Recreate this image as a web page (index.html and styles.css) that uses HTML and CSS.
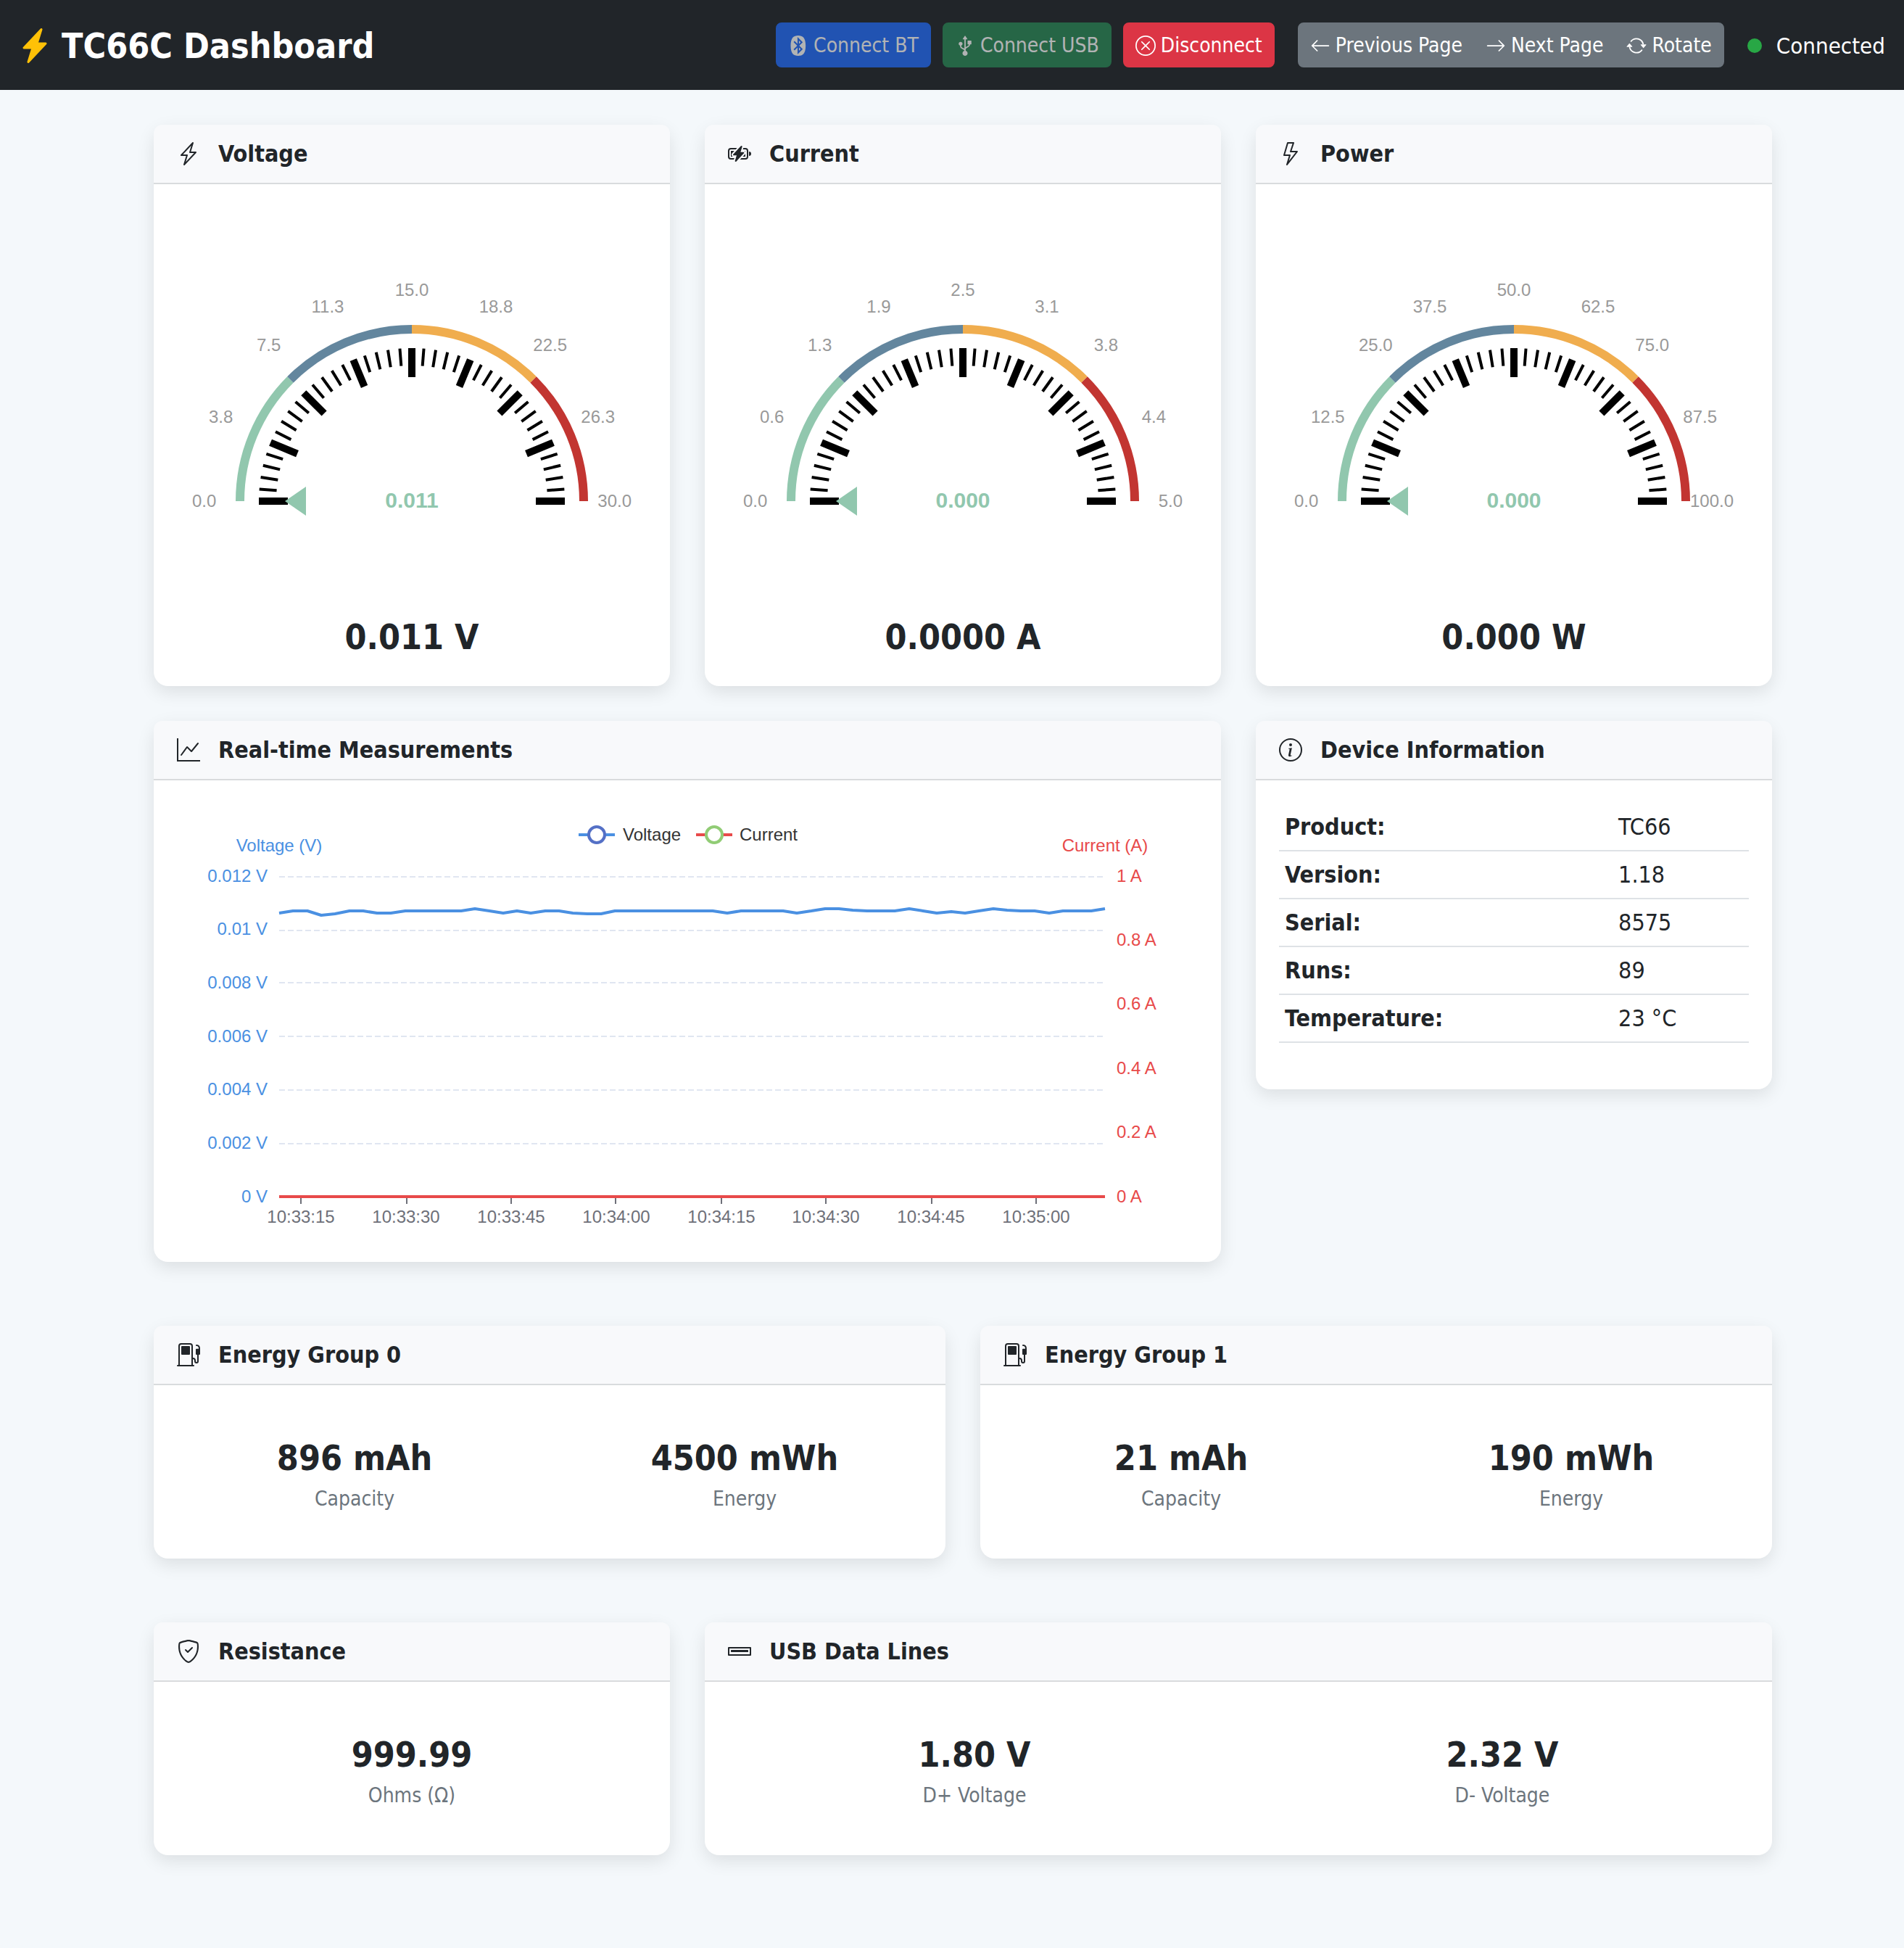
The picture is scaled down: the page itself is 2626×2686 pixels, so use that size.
FILE: index.html
```html
<!DOCTYPE html>
<html lang="en">
<head>
<meta charset="utf-8">
<meta name="viewport" content="width=device-width, initial-scale=1">
<title>TC66C Dashboard</title>
<link rel="stylesheet" href="styles.css">
</head>
<body>

<svg class="defs" aria-hidden="true">
  <defs>
    <g id="tick-octant">
      <line class="tick-major" x1="-211" x2="-171"/>
      <line class="tick-minor" x1="-211" x2="-187" transform="rotate(4.5)"/>
      <line class="tick-minor" x1="-211" x2="-187" transform="rotate(9)"/>
      <line class="tick-minor" x1="-211" x2="-187" transform="rotate(13.5)"/>
      <line class="tick-minor" x1="-211" x2="-187" transform="rotate(18)"/>
    </g>
    <g id="dial">
      <path class="arc arc-low" d="M-237 0A237 237 0 0 1 -167.6 -167.6"/>
      <path class="arc arc-mid" d="M-167.6 -167.6A237 237 0 0 1 0 -237"/>
      <path class="arc arc-high" d="M0 -237A237 237 0 0 1 167.6 -167.6"/>
      <path class="arc arc-max" d="M167.6 -167.6A237 237 0 0 1 237 0"/>
      <use href="#tick-octant"/>
      <use href="#tick-octant" transform="rotate(22.5)"/>
      <use href="#tick-octant" transform="rotate(45)"/>
      <use href="#tick-octant" transform="rotate(67.5)"/>
      <use href="#tick-octant" transform="rotate(90)"/>
      <use href="#tick-octant" transform="rotate(112.5)"/>
      <use href="#tick-octant" transform="rotate(135)"/>
      <use href="#tick-octant" transform="rotate(157.5)"/>
      <line class="tick-major" x1="171" x2="211"/>
      <path class="pointer" d="M-175 0L-146 -20V20Z"/>
    </g>
    <symbol id="fuel-pump" viewBox="0 0 16 16">
      <path d="M3 2.5a.5.5 0 0 1 .5-.5h5a.5.5 0 0 1 .5.5v5a.5.5 0 0 1-.5.5h-5a.5.5 0 0 1-.5-.5v-5Z"/>
      <path d="M1 2a2 2 0 0 1 2-2h6a2 2 0 0 1 2 2v8a2 2 0 0 1 2 2v.5a.5.5 0 0 0 1 0V8h-.5a.5.5 0 0 1-.5-.5V4.375a.5.5 0 0 1 .5-.5h1.495c-.011-.476-.053-.894-.201-1.222a.97.97 0 0 0-.394-.458c-.184-.11-.464-.195-.9-.195a.5.5 0 0 1 0-1c.564 0 1.034.11 1.412.336.383.228.634.551.794.907.295.655.294 1.465.294 2.081v3.175a.5.5 0 0 1-.5.501H15v4.5a1.5 1.5 0 0 1-3 0V12a1 1 0 0 0-1-1v4h.5a.5.5 0 0 1 0 1H.5a.5.5 0 0 1 0-1H1V2Zm9 0a1 1 0 0 0-1-1H3a1 1 0 0 0-1 1v13h8V2Z"/>
    </symbol>
  </defs>
</svg>

<header class="navbar">
  <h1 class="brand">
    <svg class="brand-icon" viewBox="0 0 16 16" aria-hidden="true"><path d="M11.251.068a.5.5 0 0 1 .227.58L9.677 6.5H13a.5.5 0 0 1 .364.843l-8 8.5a.5.5 0 0 1-.842-.49L6.323 9.5H3a.5.5 0 0 1-.364-.843l8-8.5a.5.5 0 0 1 .615-.09z"/></svg>
    TC66C Dashboard
  </h1>
  <div class="toolbar">
    <button class="btn btn-primary" type="button" disabled>
      <svg class="btn-icon" viewBox="0 0 16 16" aria-hidden="true"><path d="m8.543 3.948 1.316 1.316L8.543 6.58V3.948zm0 8.104 1.316-1.316L8.543 9.42v2.632zm-1.41-4.043L4.275 5.133l.827-.827L7.377 6.58V1.128l4.137 4.136L8.787 8.01l2.745 2.745-4.136 4.137V9.42l-2.294 2.274-.827-.827L7.133 8.01zM7.903 16c3.498 0 5.904-1.655 5.904-8.01 0-6.335-2.406-7.99-5.903-7.99C4.407 0 2 1.655 2 8.01 2 14.344 4.407 16 7.904 16z"/></svg>
      Connect BT
    </button>
    <button class="btn btn-success" type="button" disabled>
      <svg class="btn-icon" viewBox="0 0 16 16" aria-hidden="true"><path d="m7.792.312-1.533 2.3A.25.25 0 0 0 6.467 3H7.5v7.319a2.5 2.5 0 0 0-.515-.298L5.909 9.56A1.5 1.5 0 0 1 5 8.18v-.266a1.5 1.5 0 1 0-1 0v.266a2.5 2.5 0 0 0 1.515 2.298l1.076.461a1.5 1.5 0 0 1 .888 1.129 2.001 2.001 0 1 0 1.021-.006v-.902a1.5 1.5 0 0 1 .756-1.303l1.484-.848A2.5 2.5 0 0 0 11.995 7h.755a.25.25 0 0 0 .25-.25v-2.5a.25.25 0 0 0-.25-.25h-2.5a.25.25 0 0 0-.25.25v2.5c0 .138.112.25.25.25h.741a1.5 1.5 0 0 1-.747 1.142L8.76 8.99a2.584 2.584 0 0 0-.26.17V3h1.033a.25.25 0 0 0 .208-.389L8.208.312a.25.25 0 0 0-.416 0Z"/></svg>
      Connect USB
    </button>
    <button class="btn btn-danger" type="button">
      <svg class="btn-icon" viewBox="0 0 16 16" aria-hidden="true"><path d="M8 15A7 7 0 1 1 8 1a7 7 0 0 1 0 14zm0 1A8 8 0 1 0 8 0a8 8 0 0 0 0 16z"/><path d="M4.646 4.646a.5.5 0 0 1 .708 0L8 7.293l2.646-2.647a.5.5 0 0 1 .708.708L8.707 8l2.647 2.646a.5.5 0 0 1-.708.708L8 8.707l-2.646 2.647a.5.5 0 0 1-.708-.708L7.293 8 4.646 5.354a.5.5 0 0 1 0-.708z"/></svg>
      Disconnect
    </button>
    <div class="btn-group">
      <button class="btn btn-secondary" type="button">
        <svg class="btn-icon" viewBox="0 0 16 16" aria-hidden="true"><path fill-rule="evenodd" d="M15 8a.5.5 0 0 0-.5-.5H2.707l3.147-3.146a.5.5 0 1 0-.708-.708l-4 4a.5.5 0 0 0 0 .708l4 4a.5.5 0 0 0 .708-.708L2.707 8.5H14.5A.5.5 0 0 0 15 8z"/></svg>
        Previous Page
      </button>
      <button class="btn btn-secondary" type="button">
        <svg class="btn-icon" viewBox="0 0 16 16" aria-hidden="true"><path fill-rule="evenodd" d="M1 8a.5.5 0 0 1 .5-.5h11.793l-3.147-3.146a.5.5 0 0 1 .708-.708l4 4a.5.5 0 0 1 0 .708l-4 4a.5.5 0 0 1-.708-.708L13.293 8.5H1.5A.5.5 0 0 1 1 8z"/></svg>
        Next Page
      </button>
      <button class="btn btn-secondary" type="button">
        <svg class="btn-icon" viewBox="0 0 16 16" aria-hidden="true"><path d="M11.534 7h3.932a.25.25 0 0 1 .192.41l-1.966 2.36a.25.25 0 0 1-.384 0l-1.966-2.36a.25.25 0 0 1 .192-.41zm-11 2h3.932a.25.25 0 0 0 .192-.41L2.692 6.23a.25.25 0 0 0-.384 0L.342 8.59A.25.25 0 0 0 .534 9z"/><path fill-rule="evenodd" d="M8 3c-1.552 0-2.94.707-3.857 1.818a.5.5 0 1 1-.771-.636A6.002 6.002 0 0 1 13.917 7H12.9A5.002 5.002 0 0 0 8 3zM3.1 9a5.002 5.002 0 0 0 8.757 2.182.5.5 0 1 1 .771.636A6.002 6.002 0 0 1 2.083 9H3.1z"/></svg>
        Rotate
      </button>
    </div>
    <div class="status"><span class="status-dot"></span>Connected</div>
  </div>
</header>

<main class="page">
  <section class="row thirds">
    <article class="card">
      <h2 class="card-header">
        <svg class="card-icon" viewBox="0 0 16 16" aria-hidden="true"><path d="M11.251.068a.5.5 0 0 1 .227.58L9.677 6.5H13a.5.5 0 0 1 .364.843l-8 8.5a.5.5 0 0 1-.842-.49L6.323 9.5H3a.5.5 0 0 1-.364-.843l8-8.5a.5.5 0 0 1 .615-.09zM4.157 8.5H7a.5.5 0 0 1 .478.647L6.11 13.59l5.732-6.09H9a.5.5 0 0 1-.478-.647L9.89 2.41 4.157 8.5z"/></svg>
        Voltage
      </h2>
      <div class="card-body">
        <svg class="gauge" viewBox="-324 -405 648 556" role="img" aria-label="Voltage gauge">
          <use href="#dial"/>
          <text class="g-start" x="-303" y="8">0.0</text>
          <text class="g-start" x="-280" y="-108">3.8</text>
          <text class="g-start" x="-214" y="-207">7.5</text>
          <text class="g-mid" x="-116" y="-260">11.3</text>
          <text class="g-mid" x="0" y="-283">15.0</text>
          <text class="g-mid" x="116" y="-260">18.8</text>
          <text class="g-end" x="214" y="-207">22.5</text>
          <text class="g-end" x="280" y="-108">26.3</text>
          <text class="g-end" x="303" y="8">30.0</text>
          <text class="g-value" x="0" y="9">0.011</text>
        </svg>
        <p class="value">0.011 V</p>
      </div>
    </article>
    <article class="card">
      <h2 class="card-header">
        <svg class="card-icon" viewBox="0 0 16 16" aria-hidden="true"><path d="M9.585 2.568a.5.5 0 0 1 .226.58L8.677 6.832h1.99a.5.5 0 0 1 .364.843l-5.334 5.667a.5.5 0 0 1-.842-.49L5.99 9.167H4a.5.5 0 0 1-.364-.843l5.333-5.667a.5.5 0 0 1 .616-.09z"/><path d="M2 4h4.332l-.94 1H2a1 1 0 0 0-1 1v4a1 1 0 0 0 1 1h2.38l-.308 1H2a2 2 0 0 1-2-2V6a2 2 0 0 1 2-2z"/><path d="M2 6h2.45L2.908 7.639A1.5 1.5 0 0 0 3.313 10H2V6zm8.595-2-.308 1H12a1 1 0 0 1 1 1v4a1 1 0 0 1-1 1H9.276l-.942 1H12a2 2 0 0 0 2-2V6a2 2 0 0 0-2-2h-1.405z"/><path d="M12 10h-1.783l1.542-1.639c.097-.103.178-.218.241-.34V10zm0-3.354V6h-.646a1.5 1.5 0 0 1 .646.646zM16 8a1.5 1.5 0 0 1-1.5 1.5v-3A1.5 1.5 0 0 1 16 8z"/></svg>
        Current
      </h2>
      <div class="card-body">
        <svg class="gauge" viewBox="-324 -405 648 556" role="img" aria-label="Current gauge">
          <use href="#dial"/>
          <text class="g-start" x="-303" y="8">0.0</text>
          <text class="g-start" x="-280" y="-108">0.6</text>
          <text class="g-start" x="-214" y="-207">1.3</text>
          <text class="g-mid" x="-116" y="-260">1.9</text>
          <text class="g-mid" x="0" y="-283">2.5</text>
          <text class="g-mid" x="116" y="-260">3.1</text>
          <text class="g-end" x="214" y="-207">3.8</text>
          <text class="g-end" x="280" y="-108">4.4</text>
          <text class="g-end" x="303" y="8">5.0</text>
          <text class="g-value" x="0" y="9">0.000</text>
        </svg>
        <p class="value">0.0000 A</p>
      </div>
    </article>
    <article class="card">
      <h2 class="card-header">
        <svg class="card-icon" viewBox="0 0 16 16" aria-hidden="true"><path d="M5.52.359A.5.5 0 0 1 6 0h4a.5.5 0 0 1 .474.658L8.694 6H12.5a.5.5 0 0 1 .395.807l-7 9a.5.5 0 0 1-.873-.454L6.823 9.5H3.5a.5.5 0 0 1-.48-.641l2.5-8.5zM6.374 1 4.168 8.5H7.5a.5.5 0 0 1 .478.647L6.78 13.04 11.478 7H8a.5.5 0 0 1-.474-.658L9.306 1H6.374z"/></svg>
        Power
      </h2>
      <div class="card-body">
        <svg class="gauge" viewBox="-324 -405 648 556" role="img" aria-label="Power gauge">
          <use href="#dial"/>
          <text class="g-start" x="-303" y="8">0.0</text>
          <text class="g-start" x="-280" y="-108">12.5</text>
          <text class="g-start" x="-214" y="-207">25.0</text>
          <text class="g-mid" x="-116" y="-260">37.5</text>
          <text class="g-mid" x="0" y="-283">50.0</text>
          <text class="g-mid" x="116" y="-260">62.5</text>
          <text class="g-end" x="214" y="-207">75.0</text>
          <text class="g-end" x="280" y="-108">87.5</text>
          <text class="g-end" x="303" y="8">100.0</text>
          <text class="g-value" x="0" y="9">0.000</text>
        </svg>
        <p class="value">0.000 W</p>
      </div>
    </article>
  </section>

  <section class="row thirds">
    <article class="card wide">
      <h2 class="card-header">
        <svg class="card-icon" viewBox="0 0 16 16" aria-hidden="true"><path fill-rule="evenodd" d="M0 0h1v15h15v1H0V0zm14.817 3.113a.5.5 0 0 1 .07.704l-4.5 5.5a.5.5 0 0 1-.74.037L7.06 6.767l-3.656 5.027a.5.5 0 0 1-.808-.588l4-5.5a.5.5 0 0 1 .758-.06l2.609 2.61 4.15-5.073a.5.5 0 0 1 .704-.07z"/></svg>
        Real-time Measurements
      </h2>
      <div class="card-body">
        <svg class="chart" viewBox="0 0 1408 600" role="img" aria-label="Voltage and current over time">
          <path class="grid-line" d="M141 101H1280M141 175H1280M141 247H1280M141 321H1280M141 395H1280M141 469H1280"/>
          <path class="x-tick" d="M171 543V552M317 543V552M461 543V552M605 543V552M751 543V552M895 543V552M1041 543V552M1185 543V552"/>

          <g class="c-volt c-end">
            <text x="125" y="108">0.012 V</text>
            <text x="125" y="181">0.01 V</text>
            <text x="125" y="255">0.008 V</text>
            <text x="125" y="329">0.006 V</text>
            <text x="125" y="402">0.004 V</text>
            <text x="125" y="476">0.002 V</text>
            <text x="125" y="550">0 V</text>
          </g>
          <g class="c-amp">
            <text x="1296" y="108">1 A</text>
            <text x="1296" y="196">0.8 A</text>
            <text x="1296" y="284">0.6 A</text>
            <text x="1296" y="373">0.4 A</text>
            <text x="1296" y="461">0.2 A</text>
            <text x="1296" y="550">0 A</text>
          </g>
          <text class="c-volt c-mid" x="141" y="66">Voltage (V)</text>
          <text class="c-amp c-mid" x="1280" y="66">Current (A)</text>
          <g class="c-time c-mid">
            <text x="171" y="578">10:33:15</text>
            <text x="316" y="578">10:33:30</text>
            <text x="461" y="578">10:33:45</text>
            <text x="606" y="578">10:34:00</text>
            <text x="751" y="578">10:34:15</text>
            <text x="895" y="578">10:34:30</text>
            <text x="1040" y="578">10:34:45</text>
            <text x="1185" y="578">10:35:00</text>
          </g>

          <polyline class="line-volt" points="141,151 160,148 180,148 199,154 218,152 238,148 257,148 276,151 295,151 315,148 334,148 353,148 373,148 392,148 411,145 431,148 450,151 469,148 488,151 508,148 527,148 546,151 566,152 585,152 604,148 624,148 643,148 662,148 682,148 701,148 720,148 739,148 759,151 778,148 797,148 817,148 836,148 855,151 875,148 894,145 913,145 932,147 952,148 971,148 990,148 1010,145 1029,148 1048,151 1068,149 1087,151 1106,148 1126,145 1145,147 1164,148 1183,148 1203,151 1222,148 1241,148 1261,148 1280,145"/>
          <path class="line-amp" d="M141 542H1280"/>

          <path class="line-volt" d="M554 43H604"/>
          <circle class="mark mark-volt" cx="579" cy="43" r="11"/>
          <text class="c-legend" x="615" y="51">Voltage</text>
          <path class="line-amp" d="M716 43H766"/>
          <circle class="mark mark-amp" cx="741" cy="43" r="11"/>
          <text class="c-legend" x="776" y="51">Current</text>
        </svg>
      </div>
    </article>
    <article class="card">
      <h2 class="card-header">
        <svg class="card-icon" viewBox="0 0 16 16" aria-hidden="true"><path d="M8 15A7 7 0 1 1 8 1a7 7 0 0 1 0 14zm0 1A8 8 0 1 0 8 0a8 8 0 0 0 0 16z"/><path d="m8.93 6.588-2.29.287-.082.38.45.083c.294.07.352.176.288.469l-.738 3.468c-.194.897.105 1.319.808 1.319.545 0 1.178-.252 1.465-.598l.088-.416c-.2.176-.492.246-.686.246-.275 0-.375-.193-.304-.533L8.93 6.588zM9 4.5a1 1 0 1 1-2 0 1 1 0 0 1 2 0z"/></svg>
        Device Information
      </h2>
      <div class="card-body">
        <table class="info">
          <tbody>
            <tr><th scope="row">Product:</th><td>TC66</td></tr>
            <tr><th scope="row">Version:</th><td>1.18</td></tr>
            <tr><th scope="row">Serial:</th><td>8575</td></tr>
            <tr><th scope="row">Runs:</th><td>89</td></tr>
            <tr><th scope="row">Temperature:</th><td>23 °C</td></tr>
          </tbody>
        </table>
      </div>
    </article>
  </section>

  <section class="row halves spaced">
    <article class="card">
      <h2 class="card-header"><svg class="card-icon" aria-hidden="true"><use href="#fuel-pump"/></svg>Energy Group 0</h2>
      <div class="card-body metrics">
        <div class="metric"><p class="value">896 mAh</p><p class="label">Capacity</p></div>
        <div class="metric"><p class="value">4500 mWh</p><p class="label">Energy</p></div>
      </div>
    </article>
    <article class="card">
      <h2 class="card-header"><svg class="card-icon" aria-hidden="true"><use href="#fuel-pump"/></svg>Energy Group 1</h2>
      <div class="card-body metrics">
        <div class="metric"><p class="value">21 mAh</p><p class="label">Capacity</p></div>
        <div class="metric"><p class="value">190 mWh</p><p class="label">Energy</p></div>
      </div>
    </article>
  </section>

  <section class="row thirds spaced">
    <article class="card">
      <h2 class="card-header">
        <svg class="card-icon" viewBox="0 0 16 16" aria-hidden="true"><path d="M5.338 1.59a61.44 61.44 0 0 0-2.837.856.481.481 0 0 0-.328.39c-.554 4.157.726 7.19 2.253 9.188a10.725 10.725 0 0 0 2.287 2.233c.346.244.652.42.893.533.12.057.218.095.293.118a.55.55 0 0 0 .101.025.615.615 0 0 0 .1-.025c.076-.023.174-.061.294-.118.24-.113.547-.29.893-.533a10.726 10.726 0 0 0 2.287-2.233c1.527-1.997 2.807-5.031 2.253-9.188a.48.48 0 0 0-.328-.39c-.651-.213-1.75-.56-2.837-.855C9.552 1.29 8.531 1.067 8 1.067c-.53 0-1.552.223-2.662.524zM5.072.56C6.157.265 7.31 0 8 0s1.843.265 2.928.56c1.11.3 2.229.655 2.887.87a1.54 1.54 0 0 1 1.044 1.262c.596 4.477-.787 7.795-2.465 9.99a11.775 11.775 0 0 1-2.517 2.453 7.159 7.159 0 0 1-1.048.625c-.28.132-.581.24-.829.24s-.548-.108-.829-.24a7.158 7.158 0 0 1-1.048-.625 11.777 11.777 0 0 1-2.517-2.453C1.928 10.487.545 7.169 1.141 2.692A1.54 1.54 0 0 1 2.185 1.43 62.456 62.456 0 0 1 5.072.56z"/><path d="M10.854 5.146a.5.5 0 0 1 0 .708l-3 3a.5.5 0 0 1-.708 0l-1.5-1.5a.5.5 0 1 1 .708-.708L7.5 7.793l2.646-2.647a.5.5 0 0 1 .708 0z"/></svg>
        Resistance
      </h2>
      <div class="card-body metrics">
        <div class="metric"><p class="value">999.99</p><p class="label">Ohms (Ω)</p></div>
      </div>
    </article>
    <article class="card wide">
      <h2 class="card-header">
        <svg class="card-icon" viewBox="0 0 16 16" aria-hidden="true"><path d="M2.25 7a.25.25 0 0 0-.25.25v1c0 .138.112.25.25.25h11.5a.25.25 0 0 0 .25-.25v-1a.25.25 0 0 0-.25-.25H2.25z"/><path d="M0 5.5A.5.5 0 0 1 .5 5h15a.5.5 0 0 1 .5.5v5a.5.5 0 0 1-.5.5H.5a.5.5 0 0 1-.5-.5v-5zM1 10h14V6H1v4z"/></svg>
        USB Data Lines
      </h2>
      <div class="card-body metrics">
        <div class="metric"><p class="value">1.80 V</p><p class="label">D+ Voltage</p></div>
        <div class="metric"><p class="value">2.32 V</p><p class="label">D- Voltage</p></div>
      </div>
    </article>
  </section>
</main>

</body>
</html>
```
FILE: styles.css
```css
* {
  box-sizing: border-box;
}

body {
  margin: 0;
  background: #f4f8fb;
  color: #212529;
  font-family: "DejaVu Sans Condensed", "DejaVu Sans", Tahoma, sans-serif;
  font-size: 32px;
  line-height: 48px;
}

h1,
h2,
p {
  margin: 0;
}

svg {
  fill: currentColor;
}

.defs {
  display: block;
  width: 0;
  height: 0;
}

/* Top bar */

.navbar {
  display: flex;
  align-items: center;
  justify-content: space-between;
  min-height: 124px;
  padding: 16px 26px 16px 24px;
  background: #212529;
  color: #fff;
}

.brand {
  display: flex;
  align-items: center;
  gap: 13px;
  padding-top: 2px;
  font-size: 48px;
  line-height: 72px;
}

.brand-icon {
  width: 48px;
  height: 48px;
  color: #ffc107;
}

.toolbar {
  display: flex;
  align-items: center;
  gap: 16px;
}

.btn {
  display: flex;
  align-items: center;
  gap: 7px;
  padding: 9px 15px 7px;
  border: 2px solid transparent;
  border-radius: 8px;
  color: #fff;
  font-family: inherit;
  font-size: 28px;
  line-height: 42px;
}

.btn:disabled {
  opacity: 0.65;
}

.btn-icon {
  width: 28px;
  height: 28px;
}

.btn-primary {
  background: #216cfc;
  border-color: #216cfc;
}

.btn-success {
  background: #298956;
  border-color: #298956;
}

.btn-danger {
  background: #dc3545;
  border-color: #dc3545;
}

.btn-secondary {
  background: #6c757d;
  border-color: #6c757d;
}

.btn-group {
  display: flex;
  margin: 0 16px;
}

.btn-group .btn + .btn {
  margin-left: -2px;
  border-top-left-radius: 0;
  border-bottom-left-radius: 0;
}

.btn-group .btn:not(:last-child) {
  border-top-right-radius: 0;
  border-bottom-right-radius: 0;
}

.status {
  display: flex;
  align-items: center;
  gap: 20px;
  padding-top: 2px;
  font-size: 31px;
}

.status-dot {
  width: 20px;
  height: 20px;
  border-radius: 50%;
  background: #28a745;
}

/* Card grid */

.page {
  max-width: 2262px;
  margin: 0 auto;
  padding: 48px 0 128px 30px;
}

.row {
  display: grid;
  gap: 48px;
  align-items: start;
}

.row + .row {
  margin-top: 48px;
}

.row + .spaced {
  margin-top: 88px;
}

.thirds {
  grid-template-columns: repeat(3, minmax(0, 1fr));
}

.halves {
  grid-template-columns: repeat(2, minmax(0, 1fr));
}

.wide {
  grid-column: span 2;
}

.card {
  border-radius: 20px;
  background: #fff;
  box-shadow: 0 8px 24px rgba(0, 0, 0, 0.1);
}

.card-header {
  display: flex;
  align-items: center;
  gap: 25px;
  padding: 16px 32px;
  border-bottom: 2px solid #d9dbdd;
  border-radius: 12px 12px 0 0;
  background: #f8f9fb;
  font-size: 32px;
}

.card-icon {
  width: 32px;
  height: 32px;
}

.card-body {
  padding: 32px;
}

.value {
  font-size: 48px;
  font-weight: 700;
  line-height: 72px;
  text-align: center;
}

.label {
  color: #6c757d;
  font-size: 28px;
  line-height: 42px;
  text-align: center;
}

.metrics {
  display: flex;
  gap: 48px;
}

.metric {
  flex: 1;
  padding: 32px 0 29px;
}

/* Gauges */

.gauge,
.chart {
  display: block;
  width: 100%;
  height: auto;
  font-family: "Liberation Sans", Arial, sans-serif;
  font-size: 24px;
}

.gauge {
  fill: #999;
}

.arc {
  fill: none;
  stroke-width: 12px;
}

.arc-low {
  stroke: #91c7ae;
}

.arc-mid {
  stroke: #63869e;
}

.arc-high {
  stroke: #f0ad4e;
}

.arc-max {
  stroke: #c23531;
}

.tick-major {
  stroke: #000;
  stroke-width: 10px;
}

.tick-minor {
  stroke: #000;
  stroke-width: 4px;
}

.pointer {
  fill: #91c7ae;
}

.g-mid,
.c-mid {
  text-anchor: middle;
}

.g-end,
.c-end {
  text-anchor: end;
}

.g-value {
  fill: #91c7ae;
  font-size: 30px;
  font-weight: 700;
  text-anchor: middle;
}

/* Chart */

.grid-line {
  fill: none;
  stroke: #e0e6f1;
  stroke-width: 2px;
  stroke-dasharray: 8 4;
}

.x-tick {
  fill: none;
  stroke: #6e7079;
  stroke-width: 2px;
}

.line-volt,
.line-amp {
  fill: none;
  stroke-width: 4px;
  stroke-linejoin: bevel;
}

.line-volt {
  stroke: #4a90e2;
}

.line-amp {
  stroke: #e84a4a;
}

.mark {
  fill: #fff;
  stroke-width: 4px;
}

.mark-volt {
  stroke: #5470c6;
}

.mark-amp {
  stroke: #91cc75;
}

.c-volt {
  fill: #4a90e2;
}

.c-amp {
  fill: #e84a4a;
}

.c-time {
  fill: #6e7079;
}

.c-legend {
  fill: #333;
}

/* Device table */

.info {
  width: 100%;
  margin-bottom: 32px;
  border-collapse: collapse;
}

.info th,
.info td {
  padding: 8px;
  border-bottom: 2px solid #dee2e6;
  text-align: left;
}

.info th {
  width: 71%;
}
```
